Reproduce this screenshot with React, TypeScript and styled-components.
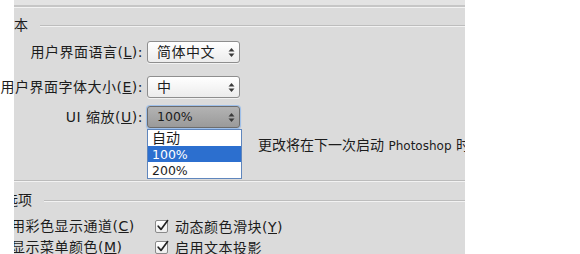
import React from "react";
import styled, { createGlobalStyle } from "styled-components";

const Global = createGlobalStyle`
  html, body { margin: 0; padding: 0; background: #ffffff; }
  body {
    font-family: "DejaVu Sans", "Noto Sans CJK SC", sans-serif;
    color: #1c1c1c;
  }
`;

const Stage = styled.div`
  width: 580px;
  height: 254px;
  overflow: hidden;
  display: flex;
  background: #ffffff;
`;

const Gutter = styled.div`
  width: 14px;
  flex: none;
  background: #ffffff;
`;

const Panel = styled.div`
  width: 451px;
  flex: none;
  height: 254px;
  background: #dbdbdb;
  display: flex;
  flex-direction: column;
`;

const TopBand = styled.div`
  height: 5px;
  flex: none;
  background: #e3e3e3;
  border-bottom: 2px solid #c6c6c6;
  box-shadow: 0 1px 0 #f3f3f3;
`;

const SectionHead = styled.div<{ $mt: number; $shift: number }>`
  margin-top: ${(p) => p.$mt}px;
  height: 16px;
  flex: none;
  display: flex;
  align-items: center;
  overflow: hidden;
  span {
    margin-left: ${(p) => -p.$shift}px;
    font-size: 14px;
    line-height: 16px;
    white-space: nowrap;
  }
`;

const Rule = styled.div`
  flex: 1;
  height: 1px;
  margin-left: 12px;
  background: #bdbdbd;
  box-shadow: 0 1px 0 #f2f2f2;
`;

const Row = styled.div<{ $mt: number }>`
  margin-top: ${(p) => p.$mt}px;
  display: grid;
  grid-template-columns: 129px auto;
  column-gap: 4px;
  align-items: center;
  height: 22px;
  flex: none;
`;

const Label = styled.div`
  display: flex;
  justify-content: flex-end;
  white-space: nowrap;
  font-size: 14px;
  letter-spacing: 0.5px;
  line-height: 16px;
  u { text-decoration: underline; text-underline-offset: 1px; }
`;

const SelectWrap = styled.div`
  position: relative;
  width: 93px;
  height: 22px;
`;

const SelectBox = styled.div<{ $focused?: boolean }>`
  box-sizing: border-box;
  width: 93px;
  height: 22px;
  border-radius: 3px;
  border: 1px solid ${(p) => (p.$focused ? "#6c6c6c" : "#8e8e8e")};
  background: ${(p) =>
    p.$focused
      ? "linear-gradient(#b3b3b3, #9a9a9a)"
      : "linear-gradient(#ffffff, #ececec)"};
  box-shadow: ${(p) =>
    p.$focused ? "0 0 0 1px #9fc0ea, 0 1px 2px #7aa6df" : "0 1px 0 #f2f2f2"};
  display: flex;
  align-items: center;
  justify-content: space-between;
  padding: 0 4px 0 9px;
  font-size: 14px;
  letter-spacing: 0.5px;
  line-height: 16px;
  white-space: nowrap;
`;

const Num = styled.span`
  font-size: 12.5px;
  letter-spacing: 0;
`;

const Arrows = () => (
  <svg width="7" height="11" viewBox="0 0 7 11">
    <path d="M0.5 4.5 L3.5 1 L6.5 4.5 Z" fill="#3a3a3a" />
    <path d="M0.5 6.5 L3.5 10 L6.5 6.5 Z" fill="#3a3a3a" />
  </svg>
);

const Dropdown = styled.ul`
  position: absolute;
  top: calc(100% + 1px);
  left: 0;
  width: 95px;
  margin: 0;
  padding: 0;
  list-style: none;
  box-sizing: border-box;
  background: #ffffff;
  border: 1px solid #5f86bd;
  z-index: 5;
`;

const Option = styled.li<{ $active?: boolean }>`
  height: 16px;
  line-height: 16px;
  padding-left: 4px;
  font-size: 14px;
  background: ${(p) => (p.$active ? "#2c6fcf" : "transparent")};
  color: ${(p) => (p.$active ? "#ffffff" : "#1c1c1c")};
  white-space: nowrap;
`;

const Note = styled.div`
  margin-top: 9px;
  margin-left: 244px;
  height: 16px;
  line-height: 16px;
  overflow: hidden;
  white-space: nowrap;
  font-size: 14px;
  flex: none;
`;

const Latin = styled.span`
  font-size: 12px;
`;

const Divider = styled.div`
  margin-top: 27px;
  height: 1px;
  flex: none;
  background: #bcbcbc;
  box-shadow: 0 1px 0 #f2f2f2;
`;

const CheckGrid = styled.div`
  margin-top: 9px;
  display: grid;
  grid-template-columns: 141px 1fr;
  row-gap: 3px;
  overflow: hidden;
  flex: none;
`;

const Plain = styled.div`
  height: 18px;
  line-height: 18px;
  margin-left: -3px;
  font-size: 14px;
  letter-spacing: 0.5px;
  white-space: nowrap;
  u { text-decoration: underline; }
`;

const CheckItem = styled.label`
  display: flex;
  align-items: center;
  gap: 7px;
  height: 18px;
  font-size: 14px;
  letter-spacing: 0.5px;
  white-space: nowrap;
  u { text-decoration: underline; }
`;

const Box = styled.span`
  position: relative;
  width: 13px;
  height: 13px;
  box-sizing: border-box;
  border: 1px solid #8a8a8a;
  border-radius: 2px;
  background: linear-gradient(#ffffff, #eeeeee);
  flex: none;
  svg {
    position: absolute;
    left: 0px;
    top: -2px;
    overflow: visible;
  }
`;

const Check = () => (
  <Box>
    <svg width="13" height="13" viewBox="0 0 13 13">
      <path
        d="M2.2 7.2 L5 10.4 L11.6 1.6"
        fill="none"
        stroke="#222"
        strokeWidth="1.7"
        strokeLinecap="round"
        strokeLinejoin="round"
      />
    </svg>
  </Box>
);

export default function App() {
  return (
    <>
      <Global />
      <Stage>
        <Gutter />
        <Panel>
          <TopBand />
          <SectionHead $mt={10} $shift={14}>
            <span>文本</span>
            <Rule />
          </SectionHead>

          <Row $mt={8}>
            <Label>
              用户界面语言(<u>L</u>):
            </Label>
            <SelectWrap>
              <SelectBox>
                <span>简体中文</span>
                <Arrows />
              </SelectBox>
            </SelectWrap>
          </Row>

          <Row $mt={13}>
            <Label>
              用户界面字体大小(<u>E</u>):
            </Label>
            <SelectWrap>
              <SelectBox>
                <span>中</span>
                <Arrows />
              </SelectBox>
            </SelectWrap>
          </Row>

          <Row $mt={8}>
            <Label>
              UI 缩放(<u>U</u>):
            </Label>
            <SelectWrap>
              <SelectBox $focused>
                <Num>100%</Num>
                <Arrows />
              </SelectBox>
              <Dropdown>
                <Option>自动</Option>
                <Option $active>
                  <Num>100%</Num>
                </Option>
                <Option>
                  <Num>200%</Num>
                </Option>
              </Dropdown>
            </SelectWrap>
          </Row>

          <Note>
            更改将在下一次启动 <Latin>Photoshop</Latin> 时生效。
          </Note>

          <Divider />

          <SectionHead $mt={11} $shift={10}>
            <span>选项</span>
            <Rule />
          </SectionHead>

          <CheckGrid>
            <Plain>
              用彩色显示通道(<u>C</u>)
            </Plain>
            <CheckItem>
              <Check />
              <span>
                动态颜色滑块(<u>Y</u>)
              </span>
            </CheckItem>
            <Plain>
              显示菜单颜色(<u>M</u>)
            </Plain>
            <CheckItem>
              <Check />
              <span>启用文本投影</span>
            </CheckItem>
          </CheckGrid>
        </Panel>
      </Stage>
    </>
  );
}
